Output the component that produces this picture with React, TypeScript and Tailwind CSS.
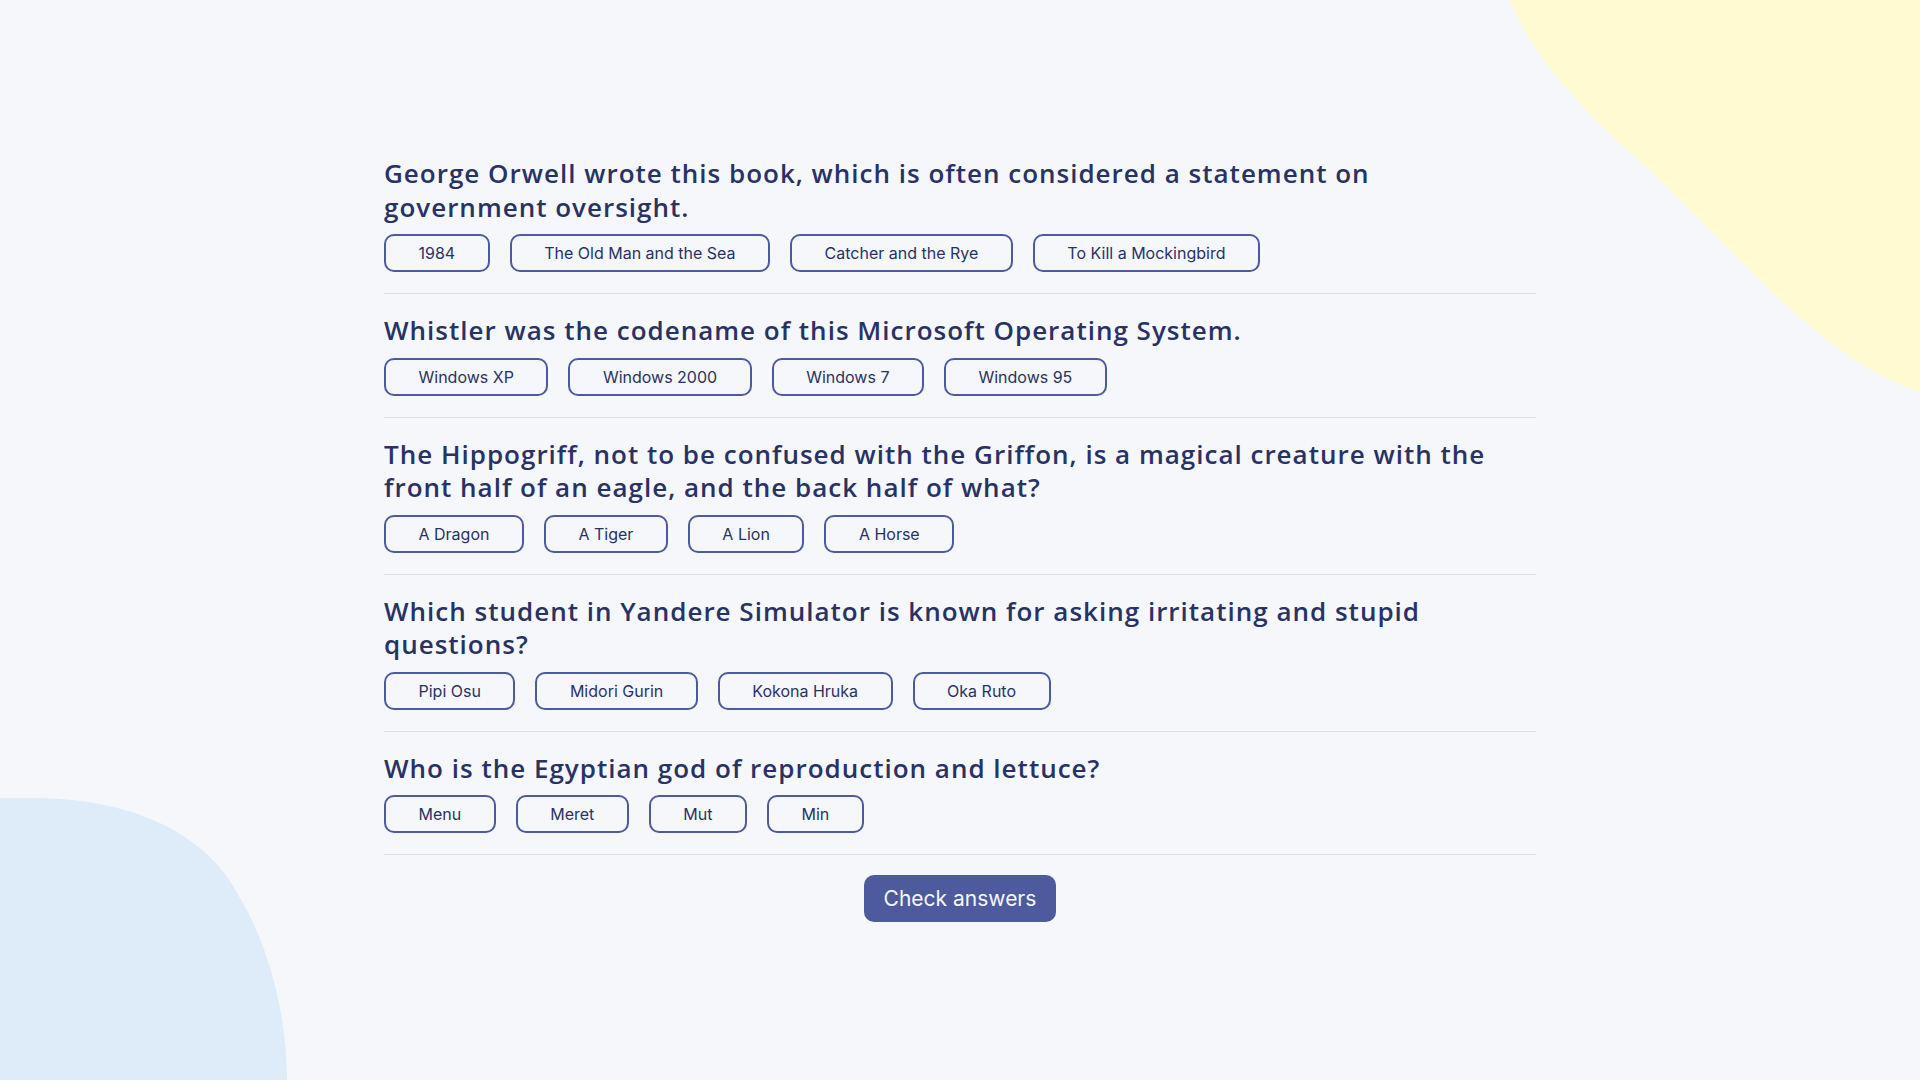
import { useState } from "react";

type Question = {
  question: string;
  answers: string[];
};

const questions: Question[] = [
  {
    question:
      "George Orwell wrote this book, which is often considered a statement on government oversight.",
    answers: ["1984", "The Old Man and the Sea", "Catcher and the Rye", "To Kill a Mockingbird"],
  },
  {
    question: "Whistler was the codename of this Microsoft Operating System.",
    answers: ["Windows XP", "Windows 2000", "Windows 7", "Windows 95"],
  },
  {
    question:
      "The Hippogriff, not to be confused with the Griffon, is a magical creature with the front half of an eagle, and the back half of what?",
    answers: ["A Dragon", "A Tiger", "A Lion", "A Horse"],
  },
  {
    question:
      "Which student in Yandere Simulator is known for asking irritating and stupid questions?",
    answers: ["Pipi Osu", "Midori Gurin", "Kokona Hruka", "Oka Ruto"],
  },
  {
    question: "Who is the Egyptian god of reproduction and lettuce?",
    answers: ["Menu", "Meret", "Mut", "Min"],
  },
];

function QuestionBlock({ q }: { q: Question }) {
  const [selected, setSelected] = useState<string | null>(null);

  return (
    <div className="pt-5 pb-[21px] border-b border-[#DBDEF0]">
      <h2 className="w-[1125px] font-['Open_Sans',sans-serif] font-semibold text-[26px] leading-[33.5px] tracking-[1px] text-[#293264]">
        {q.question}
      </h2>
      <div className="mt-[10px] flex gap-5">
        {q.answers.map((a) => (
          <button
            key={a}
            onClick={() => setSelected(a)}
            className={
              "h-[38px] px-[32.5px] flex items-center rounded-[10px] border-2 border-[#4D5B9E] font-['Inter',sans-serif] text-[16px] text-[#293264] " +
              (selected === a ? "bg-[#D6DBF5] border-transparent" : "bg-transparent")
            }
          >
            {a}
          </button>
        ))}
      </div>
    </div>
  );
}

export default function App() {
  return (
    <div className="relative h-[1080px] w-full overflow-hidden bg-[#F5F7FB]">
      {/* yellow blob, top right */}
      <svg
        className="absolute top-0 right-0"
        width="410"
        height="392"
        viewBox="0 0 410 392"
      >
        <path
          d="M0,0 C20,50 60,100 140,170 L270,300 C320,345 360,375 410,392 L410,0 Z"
          fill="#FFFAD1"
        />
      </svg>

      {/* blue blob, bottom left */}
      <svg
        className="absolute bottom-0 left-0"
        width="290"
        height="282"
        viewBox="0 0 290 282"
      >
        <path
          d="M0,282 L0,0 L30,0 C140,0 210,40 240,100 C270,150 287,220 287,282 Z"
          fill="#DEEBF8"
        />
      </svg>

      <div className="relative mx-auto w-[1152px] pt-[137px]">
        {questions.map((q) => (
          <QuestionBlock key={q.question} q={q} />
        ))}
        <div className="mt-5 flex justify-center">
          <button className="h-[47px] w-[192px] rounded-[10px] bg-[#4D5B9E] font-['Inter',sans-serif] text-[21px] text-[#F5F7FB]">
            Check answers
          </button>
        </div>
      </div>
    </div>
  );
}
